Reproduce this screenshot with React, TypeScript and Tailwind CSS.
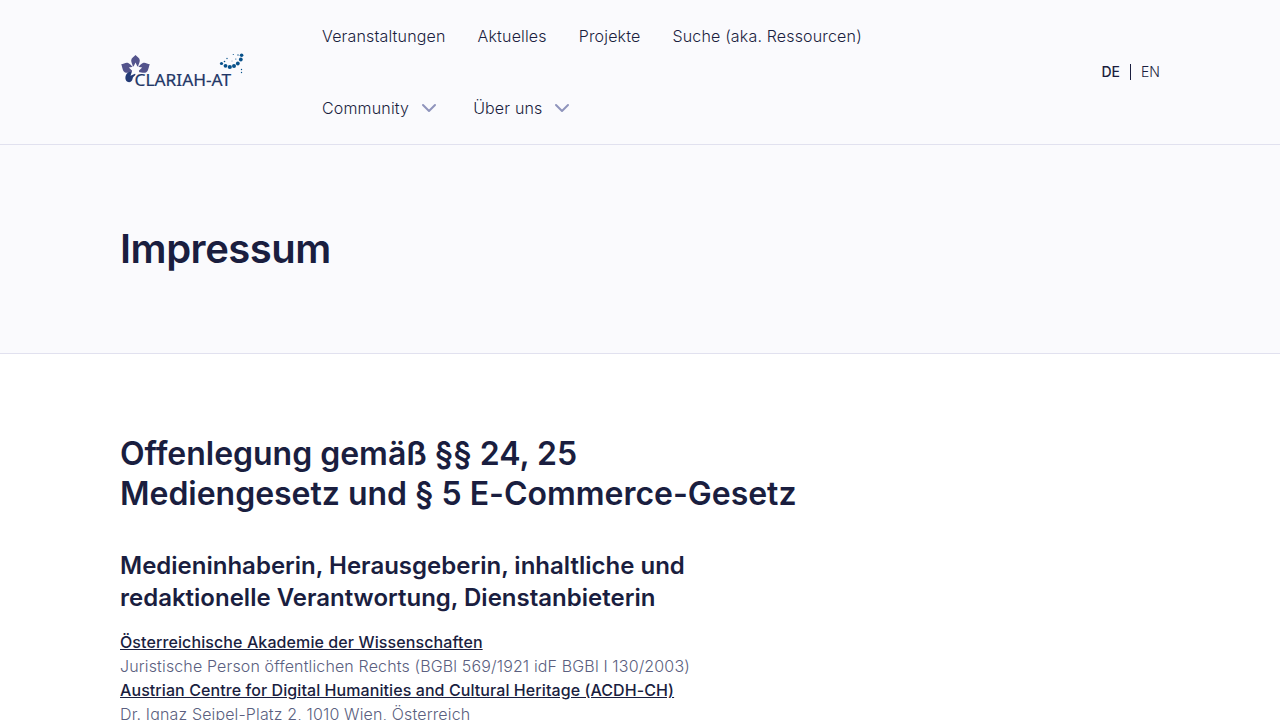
import React from "react";

const Chevron = () => (
  <svg className="h-6 w-6" viewBox="0 0 24 24" fill="none" stroke="#8f94bc" strokeWidth="2" strokeLinecap="round" strokeLinejoin="round">
    <path d="M6 9l6 6 6-6" />
  </svg>
);

const dots = [
  [101.5, 11.5, 1.6], [105.5, 13.8, 1.9], [109.8, 15, 2.1], [114, 14, 2], [117.8, 11.5, 1.9], [120.8, 7.5, 1.9], [121.6, 3.2, 1.8],
  [104.5, 9.5, 0.8], [107, 6.5, 0.7], [113.3, 2.5, 0.6], [115.8, 7, 0.6], [118, 3, 0.7], [121.5, 17.5, 0.7], [121.5, 20.5, 0.7], [112, 9, 0.4],
];

const Logo = () => (
  <svg className="block h-10 w-[126px]" viewBox="0 0 126 40" role="img" aria-label="CLARIAH-AT">
    <g fill="#53538c">
      <path d="M15.500 3c1.500 1.500 4.300 3 4.300 5.500 0 2.200-1.300 4-1.700 6h-5.200c-.4-2-1.700-3.800-1.700-6 0-2.500 2.800-4 4.300-5.500z" />
      <path d="M1.200 12.300c2.500-.2 4.600-2.200 7-1.200 2.200.9 3.300 3.200 5.300 4.500l-1.500 4.600c-2 0-4.800 1.200-7 .2-2.700-1.300-2.500-5.300-3.800-8.100z" />
      <path d="M29.800 12.300c-2.500-.2-4.600-2.200-7-1.200-2.200.9-3.300 3.200-5.300 4.500l1.500 4.600c2 0 4.800 1.200 7 .2 2.700-1.300 2.500-5.300 3.800-8.100z" />
    </g>
    <path fill="#233a76" d="M9 20h5.500l1 2.500c-.9 1.900-2.700 2-3 4.500-.2 2.200-2.500 3.600-4.500 3-2.600-.9-3.200-4.300-2-7 .6-1.300 1.700-2.300 3-3z" />
    <path fill="#fafafd" d="M15.500 10.500l2 4.300 4.700.6-3.400 3.300 1.700 5-5-2.200-5 2.200 1.700-5-3.400-3.300 4.700-.6z" />
    <text x="14.500" y="34" fontFamily="Noto Sans, sans-serif" fontSize="16.500" textLength="96.500" lengthAdjust="spacingAndGlyphs" fill="#223667" stroke="#223667" strokeWidth="0.2">CLARIAH-AT</text>
    {dots.map(([x, y, r]) => <circle key={`${x}-${y}`} cx={x} cy={y} r={r} fill="#08518a" />)}
  </svg>
);

export default function App() {
  return (
    <div className="h-[720px] overflow-hidden bg-white font-['Inter',sans-serif] text-[#1a1e3f]">
      <header className="h-[145px] border-b border-[#e1e1ef] bg-[#fafafd]">
        <div className="mx-auto flex h-36 w-[1040px] items-center">
          <div className="w-[202px]"><Logo /></div>
          <nav className="flex-1 text-base font-light tracking-[0.165px]">
            <div className="flex h-[72px] items-center gap-8">
              <a>Veranstaltungen</a><a>Aktuelles</a><a>Projekte</a><a>Suche (aka. Ressourcen)</a>
            </div>
            <div className="flex h-[72px] items-center gap-8">
              <a className="flex items-center gap-2">Community <Chevron /></a>
              <a className="flex items-center gap-2">Über uns <Chevron /></a>
            </div>
          </nav>
          <div className="flex items-center text-sm"><span className="font-medium">DE</span><span className="mr-[10px] ml-[10px] h-4 w-px bg-[#1a1e3f]" /><span className="font-light">EN</span></div>
        </div>
      </header>
      <section className="h-[209px] border-b border-[#e1e1ef] bg-[#fafafd]">
        <div className="mx-auto flex h-[208px] w-[1040px] items-center"><h1 className="text-[40px] font-semibold tracking-[-0.48px]">Impressum</h1></div>
      </section>
      <main className="mx-auto w-[1040px] pt-20">
        <h2 className="text-[32px] leading-10 font-semibold tracking-[-0.02px]">Offenlegung gemäß §§ 24, 25<br />Mediengesetz und § 5 E-Commerce-Gesetz</h2>
        <h3 className="mt-9 text-2xl leading-8 font-semibold">Medieninhaberin, Herausgeberin, inhaltliche und<br />redaktionelle Verantwortung, Dienstanbieterin</h3>
        <p className="mt-4 text-base leading-6 font-light tracking-[0.14px] text-[#5b5f80]">
          <a className="font-medium tracking-[0.1px] text-[#1a1e3f] underline">Österreichische Akademie der Wissenschaften</a><br />
          Juristische Person öffentlichen Rechts (BGBl 569/1921 idF BGBl I 130/2003)<br />
          <a className="font-medium tracking-[0.08px] text-[#1a1e3f] underline">Austrian Centre for Digital Humanities and Cultural Heritage (ACDH-CH)</a><br />
          Dr. Ignaz Seipel-Platz 2, 1010 Wien, Österreich
        </p>
      </main>
    </div>
  );
}
